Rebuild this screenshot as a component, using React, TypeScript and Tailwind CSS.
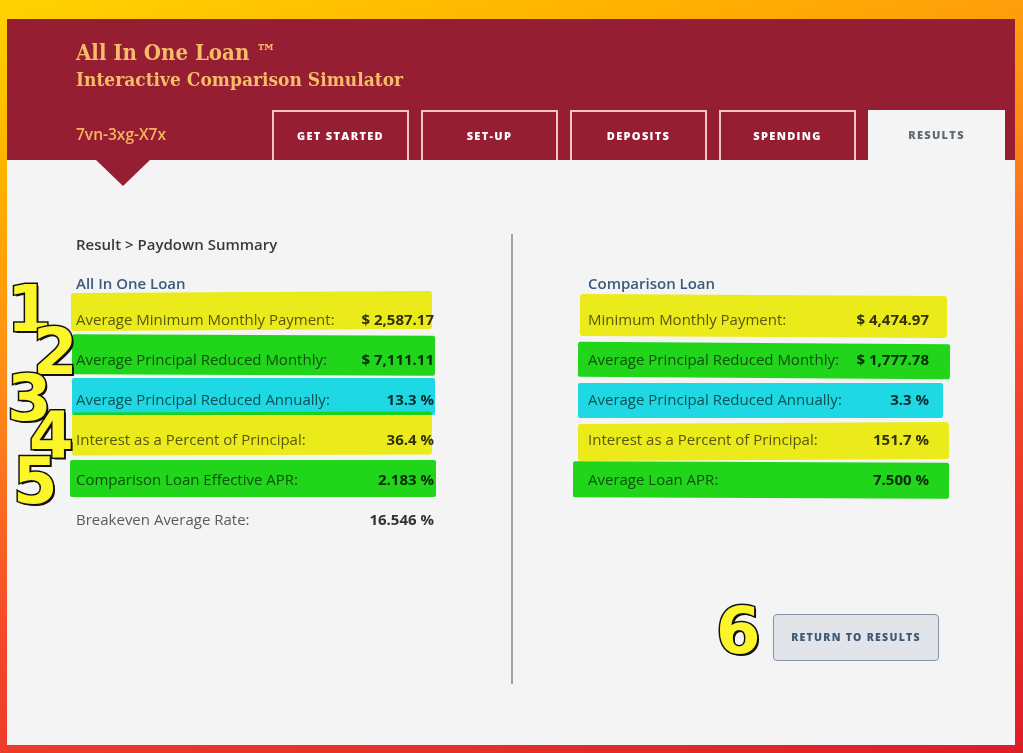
import React from 'react';

interface Row {
  label: string;
  value: string;
  hl?: string;
}

const tabs = ['GET STARTED', 'SET-UP', 'DEPOSITS', 'SPENDING', 'RESULTS'];

const leftRows: Row[] = [
  { label: 'Average Minimum Monthly Payment:', value: '$ 2,587.17', hl: 'bg-[#f6f61c] top-[-7px] h-[38px] left-[-5px] right-[2px] rounded-[3px] -rotate-[0.3deg]' },
  { label: 'Average Principal Reduced Monthly:', value: '$ 7,111.11', hl: 'bg-[#22df1c] top-[-4px] h-[40px] left-[-4px] right-[-1px] rounded-[2px] rotate-[0.2deg]' },
  { label: 'Average Principal Reduced Annually:', value: '13.3 %', hl: 'bg-[#1fe2ee] top-[-1px] h-[37px] left-[-4px] right-[-1px] rounded-[2px]' },
  { label: 'Interest as a Percent of Principal:', value: '36.4 %', hl: 'bg-[#f6f61c] top-[-7px] h-[43px] left-[-4px] right-[2px] rounded-[3px] -rotate-[0.2deg]' },
  { label: 'Comparison Loan Effective APR:', value: '2.183 %', hl: 'bg-[#22df1c] top-[1px] h-[37px] left-[-6px] right-[-2px] rounded-[2px]' },
  { label: 'Breakeven Average Rate:', value: '16.546 %' },
];

const rightRows: Row[] = [
  { label: 'Minimum Monthly Payment:', value: '$ 4,474.97', hl: 'bg-[#f6f61c] top-[-4px] h-[42px] left-[-8px] right-[-18px] rounded-[3px] rotate-[0.3deg]' },
  { label: 'Average Principal Reduced Monthly:', value: '$ 1,777.78', hl: 'bg-[#22df1c] top-[4px] h-[35px] left-[-10px] right-[-21px] rounded-[2px] rotate-[0.4deg]' },
  { label: 'Average Principal Reduced Annually:', value: '3.3 %', hl: 'bg-[#1fe2ee] top-[4px] h-[35px] left-[-10px] right-[-14px] rounded-[2px]' },
  { label: 'Interest as a Percent of Principal:', value: '151.7 %', hl: 'bg-[#f6f61c] top-[4px] h-[37px] left-[-10px] right-[-20px] rounded-[3px] -rotate-[0.3deg]' },
  { label: 'Average Loan APR:', value: '7.500 %', hl: 'bg-[#22df1c] top-[3px] h-[36px] left-[-15px] right-[-20px] rounded-[2px] rotate-[0.2deg]' },
];

const marks = [
  { n: '1', cls: 'left-[7px] top-[277px]' },
  { n: '2', cls: 'left-[33px] top-[320px]' },
  { n: '3', cls: 'left-[7px] top-[366px]' },
  { n: '4', cls: 'left-[29px] top-[404px]' },
  { n: '5', cls: 'left-[13px] top-[449px]' },
  { n: '6', cls: 'left-[716px] top-[599px]' },
];

function DataRow({ row }: { row: Row }) {
  return (
    <div className="relative h-10 flex items-center justify-between text-[15px]">
      <span className="text-[#5b5b5b]">{row.label}</span>
      <span className="font-bold text-[#333]">{row.value}</span>
      {row.hl && <span className={`absolute mix-blend-multiply ${row.hl}`} />}
    </div>
  );
}

export default function App() {
  return (
    <div
      className="relative h-screen w-full overflow-hidden pt-[19px] pl-[7px] pr-[8px] pb-[8px] bg-[linear-gradient(165deg,#ffd400_0%,#ffb000_18%,#ff8a18_38%,#f4482a_62%,#dc1d28_100%)]"
      style={{ fontFamily: '"Open Sans", "Liberation Sans", sans-serif' }}
    >
      <div className="relative flex h-full flex-col bg-[#f4f4f4]">
        {/* header */}
        <div className="relative flex h-[141px] flex-col bg-[#961e33] pt-[20px]">
          <div className="pl-[69px] text-[#f6bd69] font-bold" style={{ fontFamily: '"DejaVu Serif Condensed", "DejaVu Serif", serif' }}>
            <div className="text-[22px] leading-[26px]">All In One Loan ™</div>
            <div className="mt-[3px] text-[19px] leading-[22px]">Interactive Comparison Simulator</div>
          </div>
          <div className="mt-auto flex h-[50px] items-center pl-[69px] pr-[10px]">
            <div className="w-[196px] text-[15.5px] font-semibold text-[#f4b55c]">7vn-3xg-X7x</div>
            <div className="flex h-full gap-[12px]">
              {tabs.map((t) =>
                t === 'RESULTS' ? (
                  <div key={t} className="flex w-[137px] items-center justify-center bg-[#f4f4f4] text-[11px] font-extrabold tracking-[0.12em] text-[#5f6a72]">
                    {t}
                  </div>
                ) : (
                  <div key={t} className="flex w-[137px] items-center justify-center border-2 border-b-0 border-[#f1c3cb] text-[11px] font-extrabold tracking-[0.12em] text-white">
                    {t}
                  </div>
                )
              )}
            </div>
          </div>
          <div className="absolute left-[89px] top-[141px] h-[26px] w-[54px] bg-[#961e33] [clip-path:polygon(0_0,100%_0,50%_100%)]" />
        </div>

        {/* content */}
        <div className="flex flex-1 pt-[74px]">
          <div className="ml-[69px] w-[358px]">
            <div className="h-5 text-[15px] font-semibold leading-5 text-[#3a3a3a]">Result &gt; Paydown Summary</div>
            <div className="mt-[19px] h-5 text-[15px] font-semibold leading-5 text-[#3b5a7c]">All In One Loan</div>
            <div className="mt-[6px]">
              {leftRows.map((r) => (
                <DataRow key={r.label} row={r} />
              ))}
            </div>
          </div>
          <div className="ml-[77px] h-[450px] w-[2px] bg-[#a3a3a3]" />
          <div className="ml-[75px] w-[341px] pt-[39px]">
            <div className="h-5 text-[15px] font-semibold leading-5 text-[#3b5a7c]">Comparison Loan</div>
            <div className="mt-[6px]">
              {rightRows.map((r) => (
                <DataRow key={r.label} row={r} />
              ))}
            </div>
            <button className="ml-[185px] mt-[115px] flex h-[47px] w-[166px] items-center justify-center rounded-[4px] border border-[#8795a3] bg-[#e1e5e9] text-[10.5px] font-extrabold tracking-[0.12em] text-[#3d5a77]">
              RETURN TO RESULTS
            </button>
          </div>
        </div>
      </div>

      {/* annotation numbers */}
      {marks.map((m) => (
        <span
          key={m.n}
          className={`absolute text-[64px] leading-[64px] font-bold text-[#fbf52a] [-webkit-text-stroke:3px_#111] [paint-order:stroke_fill] [text-shadow:2px_2px_0_#111] ${m.cls}`}
          style={{ fontFamily: '"DejaVu Sans", sans-serif' }}
        >
          {m.n}
        </span>
      ))}
    </div>
  );
}
